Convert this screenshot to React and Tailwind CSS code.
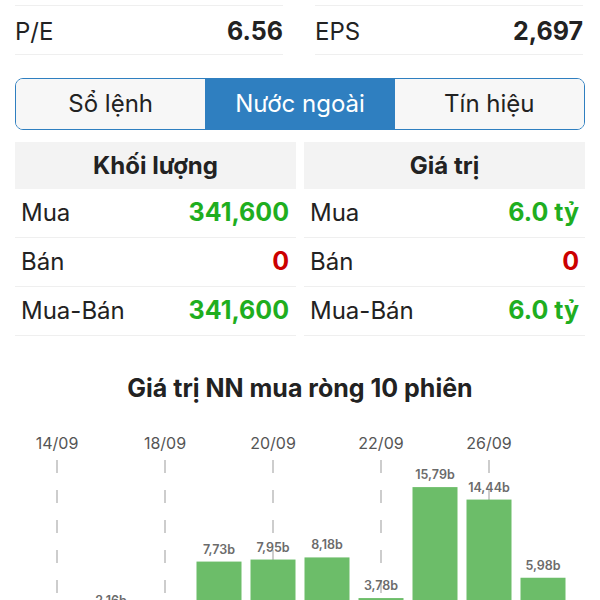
import React from "react";

const font = { fontFamily: "Inter, 'Noto Sans', sans-serif" };

const bars = [
  { date: "14/09", v: 0.9, show: true },
  { date: "15/09", v: 2.16, label: "2,16b" },
  { date: "18/09", v: 0.6, show: true },
  { date: "19/09", v: 7.73, label: "7,73b" },
  { date: "20/09", v: 7.95, label: "7,95b", show: true },
  { date: "21/09", v: 8.18, label: "8,18b" },
  { date: "22/09", v: 3.78, label: "3,78b", show: true },
  { date: "25/09", v: 15.79, label: "15,79b" },
  { date: "26/09", v: 14.44, label: "14,44b", show: true },
  { date: "27/09", v: 5.98, label: "5,98b" },
];

function Stat({ label, value }) {
  return (
    <div className="w-[268px] h-[50px] pt-[4px] flex items-center justify-between border-y border-[#efefef]">
      <span className="text-[24px] text-[#222]">{label}</span>
      <span className="text-[25px] font-bold text-[#222]">{value}</span>
    </div>
  );
}

function Table({ title, rows, pl, pr }) {
  return (
    <div className="flex-1">
      <div className="h-[47px] bg-[#f3f3f3] flex items-center justify-center text-[24px] font-bold text-[#222]">
        {title}
      </div>
      {rows.map((r) => (
        <div
          key={r[0]}
          className={`h-[49px] flex items-center justify-between border-b border-[#efefef] ${pl} ${pr}`}
        >
          <span className="text-[24px] text-[#222]">{r[0]}</span>
          <span className={`text-[25px] font-bold ${r[2] ? "text-[#cc0000]" : "text-[#1fae1f]"}`}>{r[1]}</span>
        </div>
      ))}
    </div>
  );
}

function Chart() {
  const base = 210;
  const k = 9.24;
  return (
    <svg width="600" height="230" className="block">
      {bars.map((b, i) =>
        b.show ? (
          <g key={"d" + i}>
            <text x={57 + 54 * i} y={26} textAnchor="middle" fontSize="16" fill="#555">
              {b.date}
            </text>
            <line
              x1={57 + 54 * i}
              x2={57 + 54 * i}
              y1={37}
              y2={230}
              stroke="#bdbdbd"
              strokeWidth="1.5"
              strokeDasharray="13 17"
            />
          </g>
        ) : null
      )}
      {bars.map((b, i) => {
        const cx = 57 + 54 * i;
        const top = base - b.v * k;
        return (
          <g key={"b" + i}>
            <rect x={cx - 22.5} y={top} width="45" height={b.v * k} fill="#6cbd69" />
            {b.label ? (
              <text x={cx} y={top - 8} textAnchor="middle" fontSize="12.5" fontWeight="600" fill="#6b6b6b">
                {b.label}
              </text>
            ) : null}
          </g>
        );
      })}
    </svg>
  );
}

export default function App() {
  return (
    <div className="w-[600px] h-[600px] overflow-hidden bg-white" style={font}>
      <div className="flex gap-[32px] px-[15px] pt-[5px]">
        <Stat label="P/E" value="6.56" />
        <Stat label="EPS" value="2,697" />
      </div>

      <div className="mx-[15px] mt-[23px] h-[52px] grid grid-cols-3 border border-[#2f7fc0] rounded-[8px] overflow-hidden text-[24px]">
        <div className="flex items-center justify-center bg-[#f7f7f7] text-[#222]">Sổ lệnh</div>
        <div className="flex items-center justify-center bg-[#2f7fc0] text-white">Nước ngoài</div>
        <div className="flex items-center justify-center bg-[#f7f7f7] text-[#222]">Tín hiệu</div>
      </div>

      <div className="flex gap-[8px] px-[15px] mt-[12px]">
        <Table
          title="Khối lượng"
          pl="pl-[6px]"
          pr="pr-[7px]"
          rows={[
            ["Mua", "341,600"],
            ["Bán", "0", true],
            ["Mua-Bán", "341,600"],
          ]}
        />
        <Table
          title="Giá trị"
          pl="pl-[6px]"
          pr="pr-[6px]"
          rows={[
            ["Mua", "6.0 tỷ"],
            ["Bán", "0", true],
            ["Mua-Bán", "6.0 tỷ"],
          ]}
        />
      </div>

      <div className="mt-[37px] text-center text-[25px] leading-[30px] font-bold text-[#222]">
        Giá trị NN mua ròng 10 phiên
      </div>
      <div className="mt-[20px]">
        <Chart />
      </div>
    </div>
  );
}
